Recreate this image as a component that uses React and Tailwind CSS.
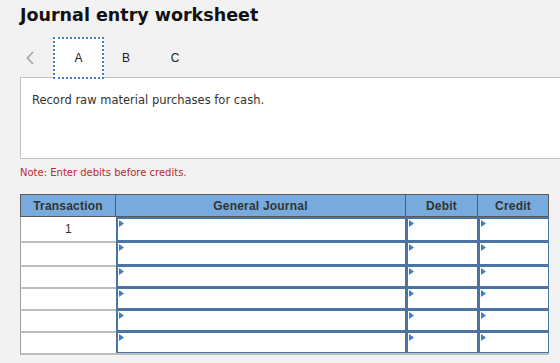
import React from "react";

const rowHeights = ["h-[24px]", "h-[24px]", "h-[22px]", "h-[22px]", "h-[22px]", "h-[22px]"];

function InputCell({ w }) {
  return (
    <div className={`relative ${w} h-full bg-white border-t-[2px] border-l-[2px] border-r border-b border-[#4b74a2]`}>
      <svg className="absolute left-[1px] top-[1px]" width="5" height="7" viewBox="0 0 5 7">
        <polygon points="0,0 5,3.5 0,7" fill="#3b7fd0" />
      </svg>
    </div>
  );
}

export default function App() {
  return (
    <div className="w-[560px] h-[363px] overflow-hidden bg-[#f2f2f2] font-['DejaVu_Sans',sans-serif]">
      <div className="pl-[20px] pt-[5px] text-[17.5px] leading-[20px] font-bold text-[#111]">
        Journal entry worksheet
      </div>
      <div className="relative z-10 flex items-center h-[42px] mt-[12px]">
        <div className="w-[53px] flex justify-start pl-[26px]">
          <svg width="8" height="14" viewBox="0 0 8 14">
            <polyline points="7,1 1.5,7 7,13" fill="none" stroke="#a8a8a8" strokeWidth="1.8" />
          </svg>
        </div>
        <div className="w-[51px] h-[42px] bg-white border-2 border-dotted border-[#3f7fc6] flex items-center justify-center text-[12px] text-[#222] font-['Liberation_Sans',sans-serif]">
          A
        </div>
        <div className="w-[44px] text-center text-[12px] text-[#222] font-['Liberation_Sans',sans-serif]">B</div>
        <div className="w-[54px] text-center text-[12px] text-[#222] font-['Liberation_Sans',sans-serif]">C</div>
      </div>
      <div className="ml-[20px] -mt-[2px] w-[560px] h-[82px] bg-white border border-[#c4c4c4] pl-[11px] pt-[15px] text-[11.5px] leading-[15px] text-[#333]">
        Record raw material purchases for cash.
      </div>
      <div className="pl-[20px] pt-[8px] text-[10px] leading-[12px] text-[#c0282e]">
        Note: Enter debits before credits.
      </div>
      <div className="ml-[20px] mt-[15px] w-[529px] font-['Liberation_Sans',sans-serif]">
        <div className="flex h-[23px] bg-[#77abdd] border border-[#5a5a5a] text-[12px] font-bold text-[#333] tracking-[0.2px]">
          <div className="w-[95px] flex items-center justify-center border-r border-[#5a5a5a]">Transaction</div>
          <div className="w-[290px] flex items-center justify-center border-r border-[#5a5a5a]">General Journal</div>
          <div className="w-[72px] flex items-center justify-center border-r border-[#5a5a5a]">Debit</div>
          <div className="flex-1 flex items-center justify-center">Credit</div>
        </div>
        <div className="border-l border-b-2 border-[#a0a0a0] border-b-[#bdbdbd]">
          {rowHeights.map((h, i) => (
            <div key={i} className={`flex ${h}`}>
              <div className={`w-[95px] h-full bg-white flex items-center justify-center text-[12px] text-[#333] ${i > 0 ? "border-t-2 border-[#bdbdbd]" : ""}`}>
                {i === 0 ? "1" : ""}
              </div>
              <InputCell w="w-[291px]" />
              <InputCell w="w-[72px]" />
              <InputCell w="w-[71px]" />
            </div>
          ))}
        </div>
      </div>
    </div>
  );
}
